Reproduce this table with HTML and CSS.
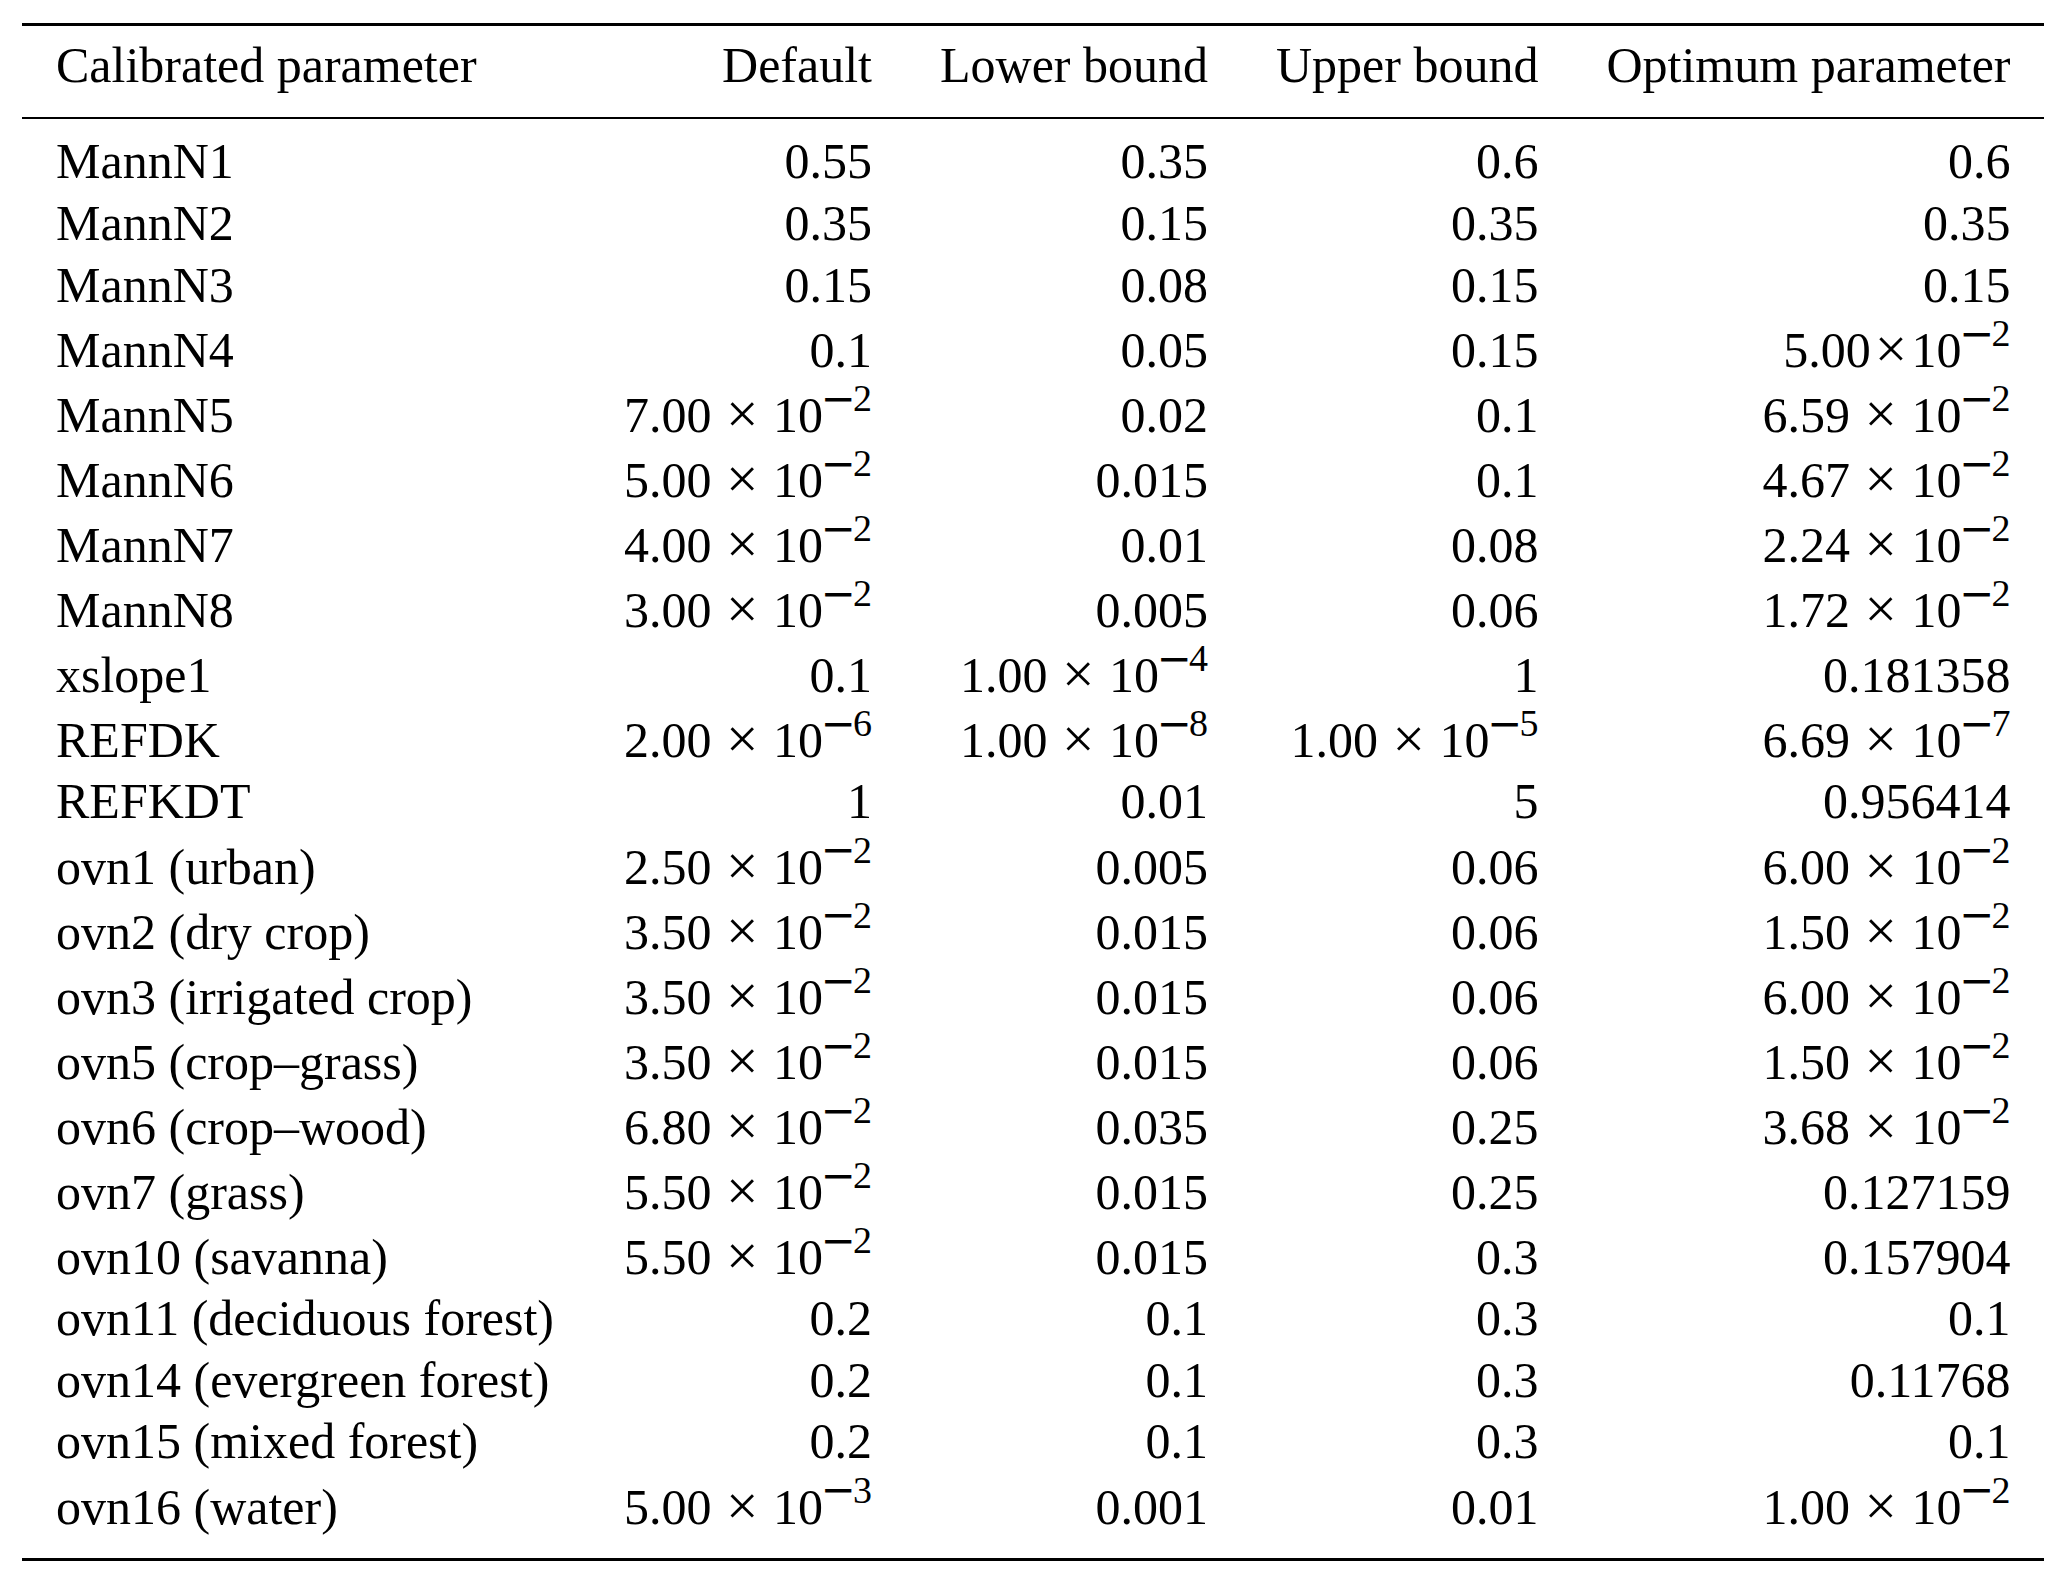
FILE: index.html
```html
<!DOCTYPE html>
<html lang="en">
<head>
<meta charset="utf-8">
<title>Calibrated parameters</title>
<link rel="stylesheet" href="styles.css">
</head>
<body>
<table class="params">
  <thead>
    <tr>
      <th class="name">Calibrated parameter</th>
      <th>Default</th>
      <th>Lower bound</th>
      <th>Upper bound</th>
      <th>Optimum parameter</th>
    </tr>
  </thead>
  <tbody>
    <tr><td class="name">MannN1</td><td class="num">0.55</td><td class="num">0.35</td><td class="num">0.6</td><td class="num">0.6</td></tr>
    <tr><td class="name">MannN2</td><td class="num">0.35</td><td class="num">0.15</td><td class="num">0.35</td><td class="num">0.35</td></tr>
    <tr><td class="name">MannN3</td><td class="num">0.15</td><td class="num">0.08</td><td class="num">0.15</td><td class="num">0.15</td></tr>
    <tr class="exp"><td class="name">MannN4</td><td class="num">0.1</td><td class="num">0.05</td><td class="num">0.15</td><td class="num">5.00&#8202;<span class="x">×</span>&#8202;10<sup><span class="neg">−</span>2</sup></td></tr>
    <tr class="exp"><td class="name">MannN5</td><td class="num">7.00 <span class="x">×</span> 10<sup><span class="neg">−</span>2</sup></td><td class="num">0.02</td><td class="num">0.1</td><td class="num">6.59 <span class="x">×</span> 10<sup><span class="neg">−</span>2</sup></td></tr>
    <tr class="exp"><td class="name">MannN6</td><td class="num">5.00 <span class="x">×</span> 10<sup><span class="neg">−</span>2</sup></td><td class="num">0.015</td><td class="num">0.1</td><td class="num">4.67 <span class="x">×</span> 10<sup><span class="neg">−</span>2</sup></td></tr>
    <tr class="exp"><td class="name">MannN7</td><td class="num">4.00 <span class="x">×</span> 10<sup><span class="neg">−</span>2</sup></td><td class="num">0.01</td><td class="num">0.08</td><td class="num">2.24 <span class="x">×</span> 10<sup><span class="neg">−</span>2</sup></td></tr>
    <tr class="exp"><td class="name">MannN8</td><td class="num">3.00 <span class="x">×</span> 10<sup><span class="neg">−</span>2</sup></td><td class="num">0.005</td><td class="num">0.06</td><td class="num">1.72 <span class="x">×</span> 10<sup><span class="neg">−</span>2</sup></td></tr>
    <tr class="exp"><td class="name">xslope1</td><td class="num">0.1</td><td class="num">1.00 <span class="x">×</span> 10<sup><span class="neg">−</span>4</sup></td><td class="num">1</td><td class="num">0.181358</td></tr>
    <tr class="exp"><td class="name">REFDK</td><td class="num">2.00 <span class="x">×</span> 10<sup><span class="neg">−</span>6</sup></td><td class="num">1.00 <span class="x">×</span> 10<sup><span class="neg">−</span>8</sup></td><td class="num">1.00 <span class="x">×</span> 10<sup><span class="neg">−</span>5</sup></td><td class="num">6.69 <span class="x">×</span> 10<sup><span class="neg">−</span>7</sup></td></tr>
    <tr><td class="name">REFKDT</td><td class="num">1</td><td class="num">0.01</td><td class="num">5</td><td class="num">0.956414</td></tr>
    <tr class="exp"><td class="name">ovn1 (urban)</td><td class="num">2.50 <span class="x">×</span> 10<sup><span class="neg">−</span>2</sup></td><td class="num">0.005</td><td class="num">0.06</td><td class="num">6.00 <span class="x">×</span> 10<sup><span class="neg">−</span>2</sup></td></tr>
    <tr class="exp"><td class="name">ovn2 (dry crop)</td><td class="num">3.50 <span class="x">×</span> 10<sup><span class="neg">−</span>2</sup></td><td class="num">0.015</td><td class="num">0.06</td><td class="num">1.50 <span class="x">×</span> 10<sup><span class="neg">−</span>2</sup></td></tr>
    <tr class="exp"><td class="name">ovn3 (irrigated crop)</td><td class="num">3.50 <span class="x">×</span> 10<sup><span class="neg">−</span>2</sup></td><td class="num">0.015</td><td class="num">0.06</td><td class="num">6.00 <span class="x">×</span> 10<sup><span class="neg">−</span>2</sup></td></tr>
    <tr class="exp"><td class="name">ovn5 (crop–grass)</td><td class="num">3.50 <span class="x">×</span> 10<sup><span class="neg">−</span>2</sup></td><td class="num">0.015</td><td class="num">0.06</td><td class="num">1.50 <span class="x">×</span> 10<sup><span class="neg">−</span>2</sup></td></tr>
    <tr class="exp"><td class="name">ovn6 (crop–wood)</td><td class="num">6.80 <span class="x">×</span> 10<sup><span class="neg">−</span>2</sup></td><td class="num">0.035</td><td class="num">0.25</td><td class="num">3.68 <span class="x">×</span> 10<sup><span class="neg">−</span>2</sup></td></tr>
    <tr class="exp"><td class="name">ovn7 (grass)</td><td class="num">5.50 <span class="x">×</span> 10<sup><span class="neg">−</span>2</sup></td><td class="num">0.015</td><td class="num">0.25</td><td class="num">0.127159</td></tr>
    <tr class="exp"><td class="name">ovn10 (savanna)</td><td class="num">5.50 <span class="x">×</span> 10<sup><span class="neg">−</span>2</sup></td><td class="num">0.015</td><td class="num">0.3</td><td class="num">0.157904</td></tr>
    <tr><td class="name">ovn11 (deciduous forest)</td><td class="num">0.2</td><td class="num">0.1</td><td class="num">0.3</td><td class="num">0.1</td></tr>
    <tr><td class="name">ovn14 (evergreen forest)</td><td class="num">0.2</td><td class="num">0.1</td><td class="num">0.3</td><td class="num">0.11768</td></tr>
    <tr><td class="name">ovn15 (mixed forest)</td><td class="num">0.2</td><td class="num">0.1</td><td class="num">0.3</td><td class="num">0.1</td></tr>
    <tr class="exp"><td class="name">ovn16 (water)</td><td class="num">5.00 <span class="x">×</span> 10<sup><span class="neg">−</span>3</sup></td><td class="num">0.001</td><td class="num">0.01</td><td class="num">1.00 <span class="x">×</span> 10<sup><span class="neg">−</span>2</sup></td></tr>
  </tbody>
</table>
</body>
</html>
```
FILE: styles.css
```css
html, body {
  margin: 0;
  padding: 0;
  background: #ffffff;
  color: #000000;
  font-family: "Liberation Serif", "Times New Roman", serif;
}

.params {
  margin: 23px 0 0 22px;
  border-collapse: separate;
  border-spacing: 0;
  font-size: 50px;
  line-height: 61.6px;
}

.params th,
.params td {
  padding: 0 34px;
  white-space: nowrap;
  text-align: right;
  font-weight: normal;
  vertical-align: baseline;
}

.params .name {
  text-align: left;
  padding-right: 36px;
}

.params thead th {
  border-top: 3px solid #000;
  border-bottom: 2px solid #000;
  padding-top: 9.4px;
  padding-bottom: 20.4px;
}

.params tbody tr:first-child td {
  padding-top: 12.1px;
}

.params tbody tr.exp td {
  padding-top: 3.45px;
}

.params tbody tr:last-child td {
  padding-bottom: 20.3px;
  border-bottom: 3px solid #000;
}

.num {
  word-spacing: 0.04em;
}

.x {
  font-size: 1.15em;
  line-height: 0;
  vertical-align: -0.02em;
}

.params sup {
  font-size: 0.76em;
  line-height: 0;
  vertical-align: 0.54em;
}

.neg {
  font-family: "DejaVu Sans", sans-serif;
  font-size: 1.1em;
  margin: 0 -0.06em;
  vertical-align: -0.035em;
}
```
